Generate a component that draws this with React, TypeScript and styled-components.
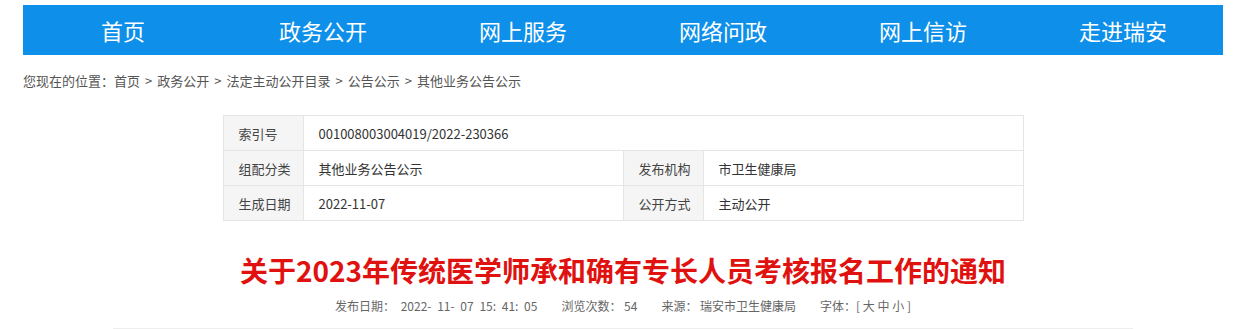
import React from 'react';
import styled, { createGlobalStyle } from 'styled-components';

const Global = createGlobalStyle`
  body {
    margin: 0;
    background: #fff;
    font-family: "Noto Sans CJK SC", "Noto Sans", sans-serif;
  }
`;

const Page = styled.div`
  width: 1200px;
  margin-left: 23px;
  padding-top: 5px;
`;

const Nav = styled.nav`
  display: grid;
  grid-template-columns: repeat(6, 1fr);
  height: 50px;
  background: #0e8fe9;
`;

const NavItem = styled.a`
  display: flex;
  align-items: center;
  justify-content: center;
  color: #fff;
  font-size: 22px;
  text-decoration: none;
`;

const Crumbs = styled.div`
  height: 50px;
  display: flex;
  align-items: center;
  font-size: 13px;
  color: #555;
`;

const Sep = styled.span`
  margin: 0 5px;
`;

const Table = styled.div`
  width: 800px;
  margin: 10px auto 0;
  border-top: 1px solid #e5e5e5;
  border-left: 1px solid #e5e5e5;
  display: grid;
  grid-template-columns: 80px 320px 80px 1fr;
  grid-auto-rows: 35px;
  font-size: 13px;
  color: #333;
`;

const Cell = styled.div<{ $label?: boolean; $span?: number }>`
  display: flex;
  align-items: center;
  padding-left: 15px;
  border-right: 1px solid #e5e5e5;
  border-bottom: 1px solid #e5e5e5;
  background: ${(p) => (p.$label ? '#f5f5f5' : '#fff')};
  color: ${(p) => (p.$label ? '#444' : '#333')};
  grid-column: span ${(p) => p.$span ?? 1};
`;

const Title = styled.h1`
  margin: 29px 0 0;
  text-align: center;
  font-size: 28px;
  line-height: 40px;
  font-weight: bold;
  color: #e0120f;
`;

const Meta = styled.div`
  display: flex;
  justify-content: center;
  gap: 24px;
  margin-top: 6px;
  font-size: 12px;
  color: #666;
  line-height: 20px;
`;

const MetaItem = styled.span<{ $spread?: boolean }>`
  word-spacing: ${(p) => (p.$spread ? '3px' : 'normal')};
`;

const Rule = styled.div`
  width: 1020px;
  margin: 12px auto 0;
  border-top: 1px solid #eee;
`;

const navItems = ['首页', '政务公开', '网上服务', '网络问政', '网上信访', '走进瑞安'];
const crumbs = ['首页', '政务公开', '法定主动公开目录', '公告公示', '其他业务公告公示'];

export default function App() {
  return (
    <>
      <Global />
      <Page>
        <Nav>
          {navItems.map((n) => (
            <NavItem key={n}>{n}</NavItem>
          ))}
        </Nav>
        <Crumbs>
          您现在的位置：
          {crumbs.map((c, i) => (
            <React.Fragment key={c}>
              {i > 0 && <Sep>&gt;</Sep>}
              {c}
            </React.Fragment>
          ))}
        </Crumbs>
        <Table>
          <Cell $label>索引号</Cell>
          <Cell $span={3}>001008003004019/2022-230366</Cell>
          <Cell $label>组配分类</Cell>
          <Cell>其他业务公告公示</Cell>
          <Cell $label>发布机构</Cell>
          <Cell>市卫生健康局</Cell>
          <Cell $label>生成日期</Cell>
          <Cell>2022-11-07</Cell>
          <Cell $label>公开方式</Cell>
          <Cell>主动公开</Cell>
        </Table>
        <Title>关于2023年传统医学师承和确有专长人员考核报名工作的通知</Title>
        <Meta>
          <MetaItem $spread>发布日期：&nbsp;2022- 11- 07 15: 41: 05</MetaItem>
          <MetaItem>浏览次数：&nbsp;54</MetaItem>
          <MetaItem>来源：&nbsp;瑞安市卫生健康局</MetaItem>
          <MetaItem>字体：[ 大 中 小 ]</MetaItem>
        </Meta>
        <Rule />
      </Page>
    </>
  );
}
